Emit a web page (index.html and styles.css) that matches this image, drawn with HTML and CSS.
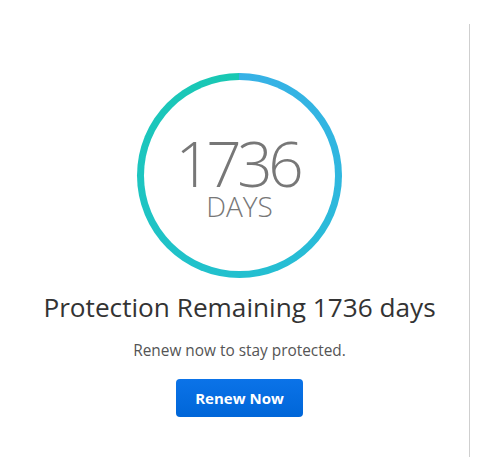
FILE: index.html
```html
<!DOCTYPE html>
<html>
<head>
<meta charset="utf-8">
<link rel="stylesheet" href="styles.css">
</head>
<body>
<div class="panel">
  <div class="ring">
    <div class="ring-inner">
      <div class="count">1736</div>
      <div class="unit">DAYS</div>
    </div>
  </div>
  <h1 class="title">Protection Remaining 1736 days</h1>
  <p class="sub">Renew now to stay protected.</p>
  <button class="btn">Renew Now</button>
</div>
</body>
</html>
```
FILE: styles.css
```css
html, body {
  margin: 0;
  padding: 0;
  background: #fff;
}
body {
  font-family: "Open Sans", "Noto Sans", sans-serif;
}
.panel {
  margin-top: 24px;
  width: 459px;
  padding-left: 10px;
  padding-top: 49px;
  height: 384px;
  border-right: 1px solid #cfcfcf;
  display: flex;
  flex-direction: column;
  align-items: center;
}
.ring {
  width: 205px;
  height: 205px;
  border-radius: 50%;
  padding: 7px;
  box-sizing: border-box;
  background: conic-gradient(from 0deg, #37b1e6 0deg, #2fb7df 90deg, #22c0cf 180deg, #1dc5c0 270deg, #18c8b2 360deg);
  flex-shrink: 0;
}
.ring-inner {
  width: 100%;
  height: 100%;
  border-radius: 50%;
  background: #fff;
  display: flex;
  flex-direction: column;
  align-items: center;
  justify-content: center;
  color: #777;
}
.count {
  font-size: 62px;
  font-weight: 300;
  line-height: 58px;
  letter-spacing: -4.5px;
  padding-right: 4.5px;
  margin-top: 2px;
}
.unit {
  font-size: 28px;
  font-weight: 300;
  line-height: 28px;
}
.title {
  margin: 11px 0 0;
  font-size: 26.2px;
  line-height: 36px;
  font-weight: 400;
  color: #333;
  white-space: nowrap;
}
.sub {
  margin: 16px 0 0;
  font-size: 15.4px;
  line-height: 20px;
  color: #555;
}
.btn {
  margin-top: 18px;
  width: 127px;
  height: 38px;
  border: none;
  border-radius: 4px;
  background: linear-gradient(#0b73e8, #0066d8);
  color: #fff;
  font-family: "Open Sans", "Noto Sans", sans-serif;
  font-weight: 700;
  font-size: 15px;
  padding: 0;
}
```
